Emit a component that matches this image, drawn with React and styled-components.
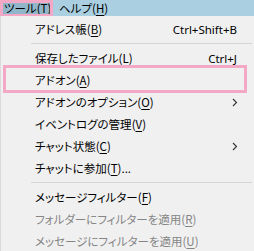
import React from "react";
import styled, { createGlobalStyle } from "styled-components";

const Global = createGlobalStyle`
  html, body { margin: 0; padding: 0; background: #f0f0f0; }
  body { font-family: "Noto Sans CJK JP", "Noto Sans", sans-serif; font-size: 11.5px; color: #000; }
  * { box-sizing: border-box; }
`;

const Page = styled.div`
  width: 254px;
  height: 251px;
  overflow: hidden;
  display: flex;
  flex-direction: column;
  position: relative;
  font-feature-settings: "palt";
`;

const MenuBar = styled.div`
  height: 20px;
  background: #a9cfe0;
  display: flex;
  align-items: stretch;
`;

const BarItem = styled.div`
  width: ${(p) => p.$w};
  padding-left: ${(p) => p.$pl};
  display: flex;
  align-items: center;
  background: ${(p) => (p.$active ? "#91b6c9" : "transparent")};
  position: relative;
`;

const Highlight = styled.div`
  position: absolute;
  inset: ${(p) => p.$inset};
  border: 3px solid #f3a9c6;
  pointer-events: none;
`;

const Menu = styled.div`
  flex: 1;
  background: #f0f0f0;
  border-left: 1px solid #dadada;
  padding-top: 2px;
  display: flex;
  flex-direction: column;
  position: relative;
`;

const Row = styled.div`
  height: 22px;
  display: flex;
  align-items: center;
  padding-left: 34px;
  padding-right: 17px;
  color: ${(p) => (p.$disabled ? "#858585" : "#000")};
  position: relative;
`;

const Label = styled.span`
  flex: 1;
  white-space: nowrap;
`;

const Shortcut = styled.span`
  font-family: "Noto Sans", sans-serif;
  font-size: 11.5px;
  white-space: nowrap;
`;

const Arrow = styled.svg`
  width: 6px;
  height: 9px;
  margin-right: -1px;
`;

const Sep = styled.div`
  height: 7px;
  margin-left: 30px;
  margin-right: 2px;
  display: flex;
  align-items: center;
  &::after {
    content: "";
    flex: 1;
    height: 1px;
    background: #d5d5d5;
  }
`;

const U = styled.span`
  text-decoration: underline;
  text-underline-offset: 2px;
`;

const Acc = ({ k }) => (
  <>
    (<U>{k}</U>)
  </>
);

const Chevron = () => (
  <Arrow viewBox="0 0 6 9">
    <path d="M1 1 L4.5 4.5 L1 8" fill="none" stroke="#333" strokeWidth="1.1" />
  </Arrow>
);

export default function App() {
  return (
    <Page>
      <Global />
      <MenuBar>
        <BarItem $active $w="53px" $pl="4px">
          ツール<Acc k="T" />
          <Highlight $inset="0 0 -1px 0" />
        </BarItem>
        <BarItem $w="auto" $pl="6px">
          ヘルプ<Acc k="H" />
        </BarItem>
      </MenuBar>
      <Menu>
        <Row>
          <Label>アドレス帳<Acc k="B" /></Label>
          <Shortcut>Ctrl+Shift+B</Shortcut>
        </Row>
        <Sep />
        <Row>
          <Label>保存したファイル<Acc k="L" /></Label>
          <Shortcut>Ctrl+J</Shortcut>
        </Row>
        <Row>
          <Label>アドオン<Acc k="A" /></Label>
          <Highlight $inset="-4px 7px -2px 2px" />
        </Row>
        <Row>
          <Label>アドオンのオプション<Acc k="O" /></Label>
          <Chevron />
        </Row>
        <Row>
          <Label>イベントログの管理<Acc k="V" /></Label>
        </Row>
        <Row>
          <Label>チャット状態<Acc k="C" /></Label>
          <Chevron />
        </Row>
        <Row>
          <Label>チャットに参加<Acc k="T" />...</Label>
        </Row>
        <Sep />
        <Row>
          <Label>メッセージフィルター<Acc k="F" /></Label>
        </Row>
        <Row $disabled>
          <Label>フォルダーにフィルターを適用<Acc k="R" /></Label>
        </Row>
        <Row $disabled>
          <Label>メッセージにフィルターを適用<Acc k="U" /></Label>
        </Row>
      </Menu>
    </Page>
  );
}
